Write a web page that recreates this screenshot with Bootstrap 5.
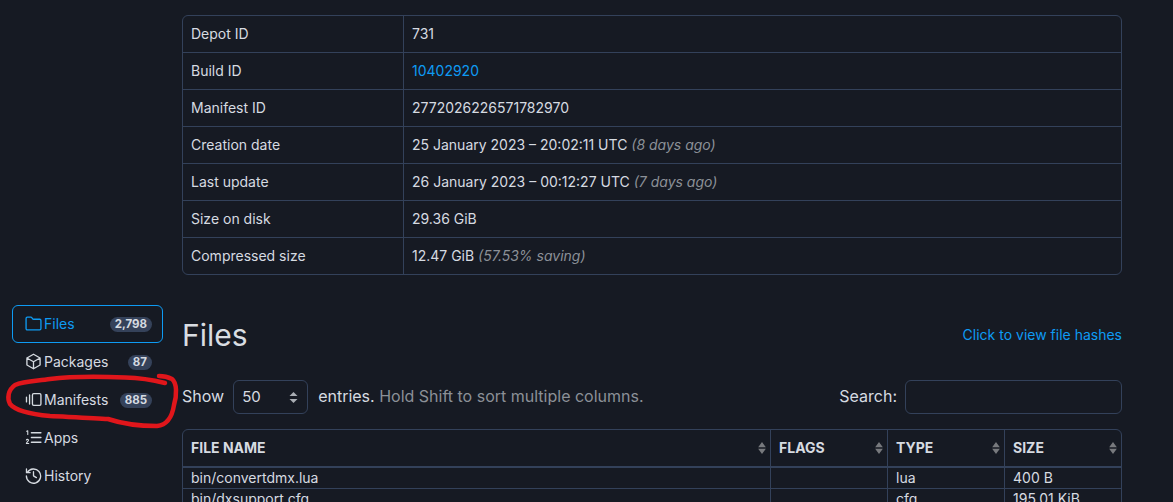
<!DOCTYPE html>
<html lang="en"><head><meta charset="utf-8"><title>Depot</title>
<link href="https://cdn.jsdelivr.net/npm/bootstrap@5.3.0/dist/css/bootstrap.min.css" rel="stylesheet">
<style>
html,body{height:502px;overflow:hidden;background:#161a23}
body{font-family:Inter,"Liberation Sans",sans-serif;font-size:14px;line-height:20px;color:#d6dbe1;position:relative}
.shell{width:1173px;height:502px;overflow:hidden}
.side{width:151px;margin:305px 19px 0 12px;flex:none}
.side-item{height:38px;padding:0 10px 0 12px;border:1px solid transparent;border-radius:6px;color:#d6dbe1;text-decoration:none;display:flex;align-items:center;gap:2px}
.side-item svg{width:17px;height:17px;flex:none;fill:none;stroke:currentColor;stroke-width:1.25;stroke-linejoin:round;stroke-linecap:round;margin-top:-2px}
.side-item.on{color:#0e9bf3;border-color:#0e9bf3}
.side-item .cnt{margin-left:auto;background:#35425a;color:#d6dbe1;font-size:11.5px;font-weight:700;line-height:15px;padding:0 5px;border-radius:8px}
.main{width:940px;padding-top:15px;flex:none}
.info,.files{width:100%;border-collapse:separate;border-spacing:0;border:1px solid #33415a;border-radius:6px;table-layout:fixed;color:#d6dbe1}
.info td{padding:8px;border-top:1px solid #33415a;border-left:1px solid #33415a;background:transparent}
.info tr:first-child td{border-top:0}
.info td:first-child{border-left:0;width:220px}
a.lnk{color:#0e9bf3;text-decoration:none}
.dim{color:#8b9097}
.ttl{height:105px;padding-top:42px}
.ttl h1{font-size:30px;line-height:36px;font-weight:400;margin:0;color:#d9dde2}
.opts{height:34px;margin-bottom:15px;font-size:16px}
.opts-txt{margin-top:-3px}
.sel{width:75px;height:34px;margin:0 10px 0 9px;border:1px solid #33415a;border-radius:6px;padding:0 9px 0 8px;display:flex;align-items:center;justify-content:space-between;font-size:15px}
.sel svg{width:9px;height:11px;fill:#a9adb3}
.srch{width:217px;height:34px;margin-left:8px;border:1px solid #33415a;border-radius:6px;background:transparent}
.files th{font-weight:700;padding:8px;border-left:1px solid #33415a;border-bottom:2px solid #33415a;position:relative;background:transparent}
.files th svg{position:absolute;right:4px;top:12px;width:8px;height:12px;fill:#77797d}
.files td{padding:0 8px;border-top:1px solid #33415a;border-left:1px solid #33415a;background:transparent}
.files tbody tr:first-child td{border-top:0}
.files th:first-child,.files td:first-child{border-left:0}
.scribble{position:absolute;left:0;top:370px;width:190px;height:70px;pointer-events:none}
</style></head>
<body>
<div class="shell d-flex">
<nav class="side d-flex flex-column">
<a class="side-item on" href="#"><svg viewBox="0 0 16 16"><path d="M1 3.200C1 2.500 1.500 2 2.200 2H5.500c.4 0 .7.2.9.5l.8 1.100c.2.3.5.4.9.4h5.700c.7 0 1.200.5 1.200 1.200v7.600c0 .7-.5 1.200-1.200 1.200H2.200C1.500 14 1 13.500 1 12.800Z"/></svg><span>Files</span><span class="cnt">2,798</span></a>
<a class="side-item" href="#"><svg viewBox="0 0 16 16"><path d="M8 1.200 14.200 4.700V11.300L8 14.800 1.800 11.300V4.700ZM1.800 4.700 8 8.200 14.200 4.700M8 8.200V14.800"/></svg><span>Packages</span><span class="cnt">87</span></a>
<a class="side-item" href="#"><svg viewBox="0 0 16 16"><rect x="7" y="2.500" width="8" height="11" rx="1.200"/><path d="M4.300 3.800V12.200M1.400 5.700V10.300"/></svg><span>Manifests</span><span class="cnt">885</span></a>
<a class="side-item" href="#"><svg viewBox="0 0 16 16"><path d="M6 3.500H15M6 8H15M6 12.500H15"/><path stroke-width="1" d="M1.600 2.200 2.600 1.700V5.200M1.300 10.400C1.500 9.500 3.300 9.500 3.300 10.600 3.300 11.500 1.400 12.500 1.300 13.700H3.500"/></svg><span>Apps</span></a>
<a class="side-item" href="#"><svg viewBox="0 0 16 16"><path d="M2.200 5.200A6.700 6.700 0 1 1 1.300 8.500M1.400 1.900V5.300H4.800M8 4.400V8.300L10.700 10"/></svg><span>History</span></a>
</nav>
<main class="main">
<table class="info">
<tr><td>Depot ID</td><td>731</td></tr>
<tr><td>Build ID</td><td><a class="lnk" href="#">10402920</a></td></tr>
<tr><td>Manifest ID</td><td>2772026226571782970</td></tr>
<tr><td>Creation date</td><td>25 January 2023 – 20:02:11 UTC <i class="dim">(8 days ago)</i></td></tr>
<tr><td>Last update</td><td>26 January 2023 – 00:12:27 UTC <i class="dim">(7 days ago)</i></td></tr>
<tr><td>Size on disk</td><td>29.36 GiB</td></tr>
<tr><td>Compressed size</td><td>12.47 GiB <i class="dim">(57.53% saving)</i></td></tr>
</table>
<div class="ttl d-flex justify-content-between align-items-start">
<h1>Files</h1><a class="lnk mt-2" href="#">Click to view file hashes</a>
</div>
<div class="opts d-flex align-items-center">
<span class="opts-txt">Show</span>
<span class="sel"><span>50</span><svg viewBox="0 0 9 11"><path d="M4.500 0 8.500 4H.5ZM.5 7H8.500L4.500 11Z"/></svg></span>
<span class="opts-txt">entries. <span class="dim">Hold Shift to sort multiple columns.</span></span>
<span class="ms-auto opts-txt">Search:</span><input class="srch" type="text" aria-label="Search">
</div>
<table class="files">
<colgroup><col style="width:587px"><col style="width:117px"><col style="width:117px"><col></colgroup>
<thead><tr>
<th>FILE NAME<svg viewBox="0 0 9 14"><path d="M4.500 0 9 6H0ZM0 8H9L4.500 14Z"/></svg></th>
<th>FLAGS<svg viewBox="0 0 9 14"><path d="M4.500 0 9 6H0ZM0 8H9L4.500 14Z"/></svg></th>
<th>TYPE<svg viewBox="0 0 9 14"><path d="M4.500 0 9 6H0ZM0 8H9L4.500 14Z"/></svg></th>
<th>SIZE<svg viewBox="0 0 9 14"><path d="M4.500 0 9 6H0ZM0 8H9L4.500 14Z"/></svg></th>
</tr></thead>
<tbody>
<tr><td>bin/convertdmx.lua</td><td></td><td>lua</td><td>400 B</td></tr>
<tr><td>bin/dxsupport.cfg</td><td></td><td>cfg</td><td>195.01 KiB</td></tr>
</tbody>
</table>
</main>
</div>
<svg class="scribble" viewBox="0 370 190 70" fill="none" stroke="#e0161b" stroke-width="4.500" stroke-linecap="round" stroke-linejoin="round"><path d="M165 383C157 381 145 378 125 377.500 100 376.500 70 376.500 50 379 38 381 24 381 15 385 8 390 7 398 10 404 15 410 28 414 50 416 70 417 95 418 108 419 120 423 140 426 157 426 167 425 172 418 174 405 177 395 177 383 172 379 168 377 163 376 159 376"/></svg>
<script src="https://cdn.jsdelivr.net/npm/bootstrap@5.3.0/dist/js/bootstrap.bundle.min.js"></script>
</body></html>
